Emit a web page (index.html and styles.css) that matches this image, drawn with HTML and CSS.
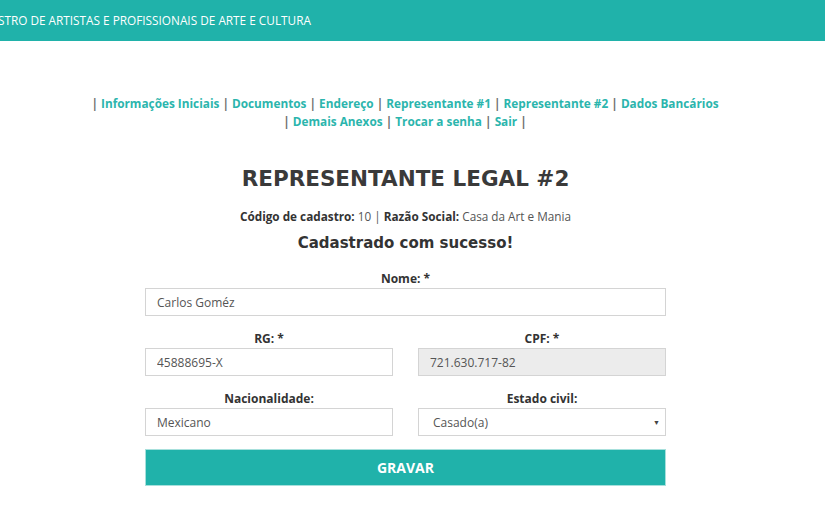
FILE: index.html
```html
<!DOCTYPE html>
<html lang="pt-BR">
<head>
<meta charset="utf-8">
<title>Representante Legal #2</title>
<link rel="stylesheet" href="styles.css">
</head>
<body>
<header class="topbar">
  <div class="brand">CADASTRO DE ARTISTAS E PROFISSIONAIS DE ARTE E CULTURA</div>
</header>
<main class="content">
  <nav class="menu">
    <div class="menu-line">| <a href="#">Informações Iniciais</a> | <a href="#">Documentos</a> | <a href="#">Endereço</a> | <a href="#">Representante #1</a> | <a href="#">Representante #2</a> | <a href="#">Dados Bancários</a></div>
    <div class="menu-line">| <a href="#">Demais Anexos</a> | <a href="#">Trocar a senha</a> | <a href="#">Sair</a> |</div>
  </nav>
  <h1 class="title">REPRESENTANTE LEGAL #2</h1>
  <p class="meta"><b>Código de cadastro:</b> 10 | <b>Razão Social:</b> Casa da Art e Mania</p>
  <h2 class="success">Cadastrado com sucesso!</h2>
  <form class="form">
    <div class="field">
      <label class="label">Nome: *</label>
      <input class="input" type="text" value="Carlos Goméz">
    </div>
    <div class="row">
      <div class="field">
        <label class="label">RG: *</label>
        <input class="input" type="text" value="45888695-X">
      </div>
      <div class="field">
        <label class="label">CPF: *</label>
        <input class="input input-disabled" type="text" value="721.630.717-82" readonly>
      </div>
    </div>
    <div class="row">
      <div class="field">
        <label class="label">Nacionalidade:</label>
        <input class="input" type="text" value="Mexicano">
      </div>
      <div class="field">
        <label class="label">Estado civil:</label>
        <div class="select">
          <span>Casado(a)</span>
          <span class="caret">▼</span>
        </div>
      </div>
    </div>
    <button class="btn" type="button">GRAVAR</button>
  </form>
</main>
</body>
</html>
```
FILE: styles.css
```css
* { box-sizing: border-box; }
html, body { margin: 0; padding: 0; background: #fff; }
body { font-family: "Open Sans", "Liberation Sans", sans-serif; color: #444; }

.topbar {
  height: 41px;
  background: #20b2aa;
  overflow: hidden;
  display: flex;
  align-items: center;
}
.brand {
  color: #fff;
  font-size: 11.8px;
  white-space: nowrap;
  margin-left: -33px;
  padding-bottom: 1px;
}

.content {
  width: 521px;
  padding-top: 53px;
  margin-left: 145px;
}
.menu {
  width: 700px;
  margin-left: -90px;
  text-align: center;
  font-size: 11.8px;
  font-weight: 700;
  color: #6b6b6b;
  line-height: 18px;
}
.menu a { color: #2bb5ad; text-decoration: none; }

.title {
  font-family: "DejaVu Sans", sans-serif;
  font-weight: 700;
  font-size: 21.5px;
  color: #3a3a3a;
  text-align: center;
  margin: 35px 0 0;
  line-height: 28px;
}
.meta {
  text-align: center;
  font-size: 11.75px;
  margin: 15px 0 0;
  line-height: 16px;
  color: #555;
}
.meta b { color: #333; }
.success {
  font-family: "DejaVu Sans", sans-serif;
  font-weight: 700;
  font-size: 15px;
  color: #333;
  text-align: center;
  margin: 8px 0 0;
  line-height: 22px;
}

.form { margin-top: 16px; display: flex; flex-direction: column; gap: 14px; }
.row { display: grid; grid-template-columns: 1fr 1fr; gap: 25px; }
.field { display: flex; flex-direction: column; }
.label {
  text-align: center;
  font-size: 12px;
  font-weight: 700;
  color: #333;
  line-height: 18px;
  margin: 0;
}
.input, .select {
  height: 28px;
  border: 1px solid #d4d4d4;
  background: #fff;
  font-family: "Open Sans", "Liberation Sans", sans-serif;
  font-size: 12px;
  color: #555;
  padding: 0 11px;
  width: 100%;
  outline: none;
}
.input-disabled { background: #ececec; }
.select {
  display: flex;
  align-items: center;
  justify-content: space-between;
  padding: 0 5px 0 14px;
}
.caret { font-size: 7px; color: #444; }

.btn {
  margin-top: -1px;
  height: 37px;
  width: 100%;
  background: #20b2aa;
  border: 1px solid #a7e0dc;
  color: #fff;
  font-family: "Open Sans", "Liberation Sans", sans-serif;
  font-weight: 700;
  font-size: 14px;
  cursor: pointer;
}
```
